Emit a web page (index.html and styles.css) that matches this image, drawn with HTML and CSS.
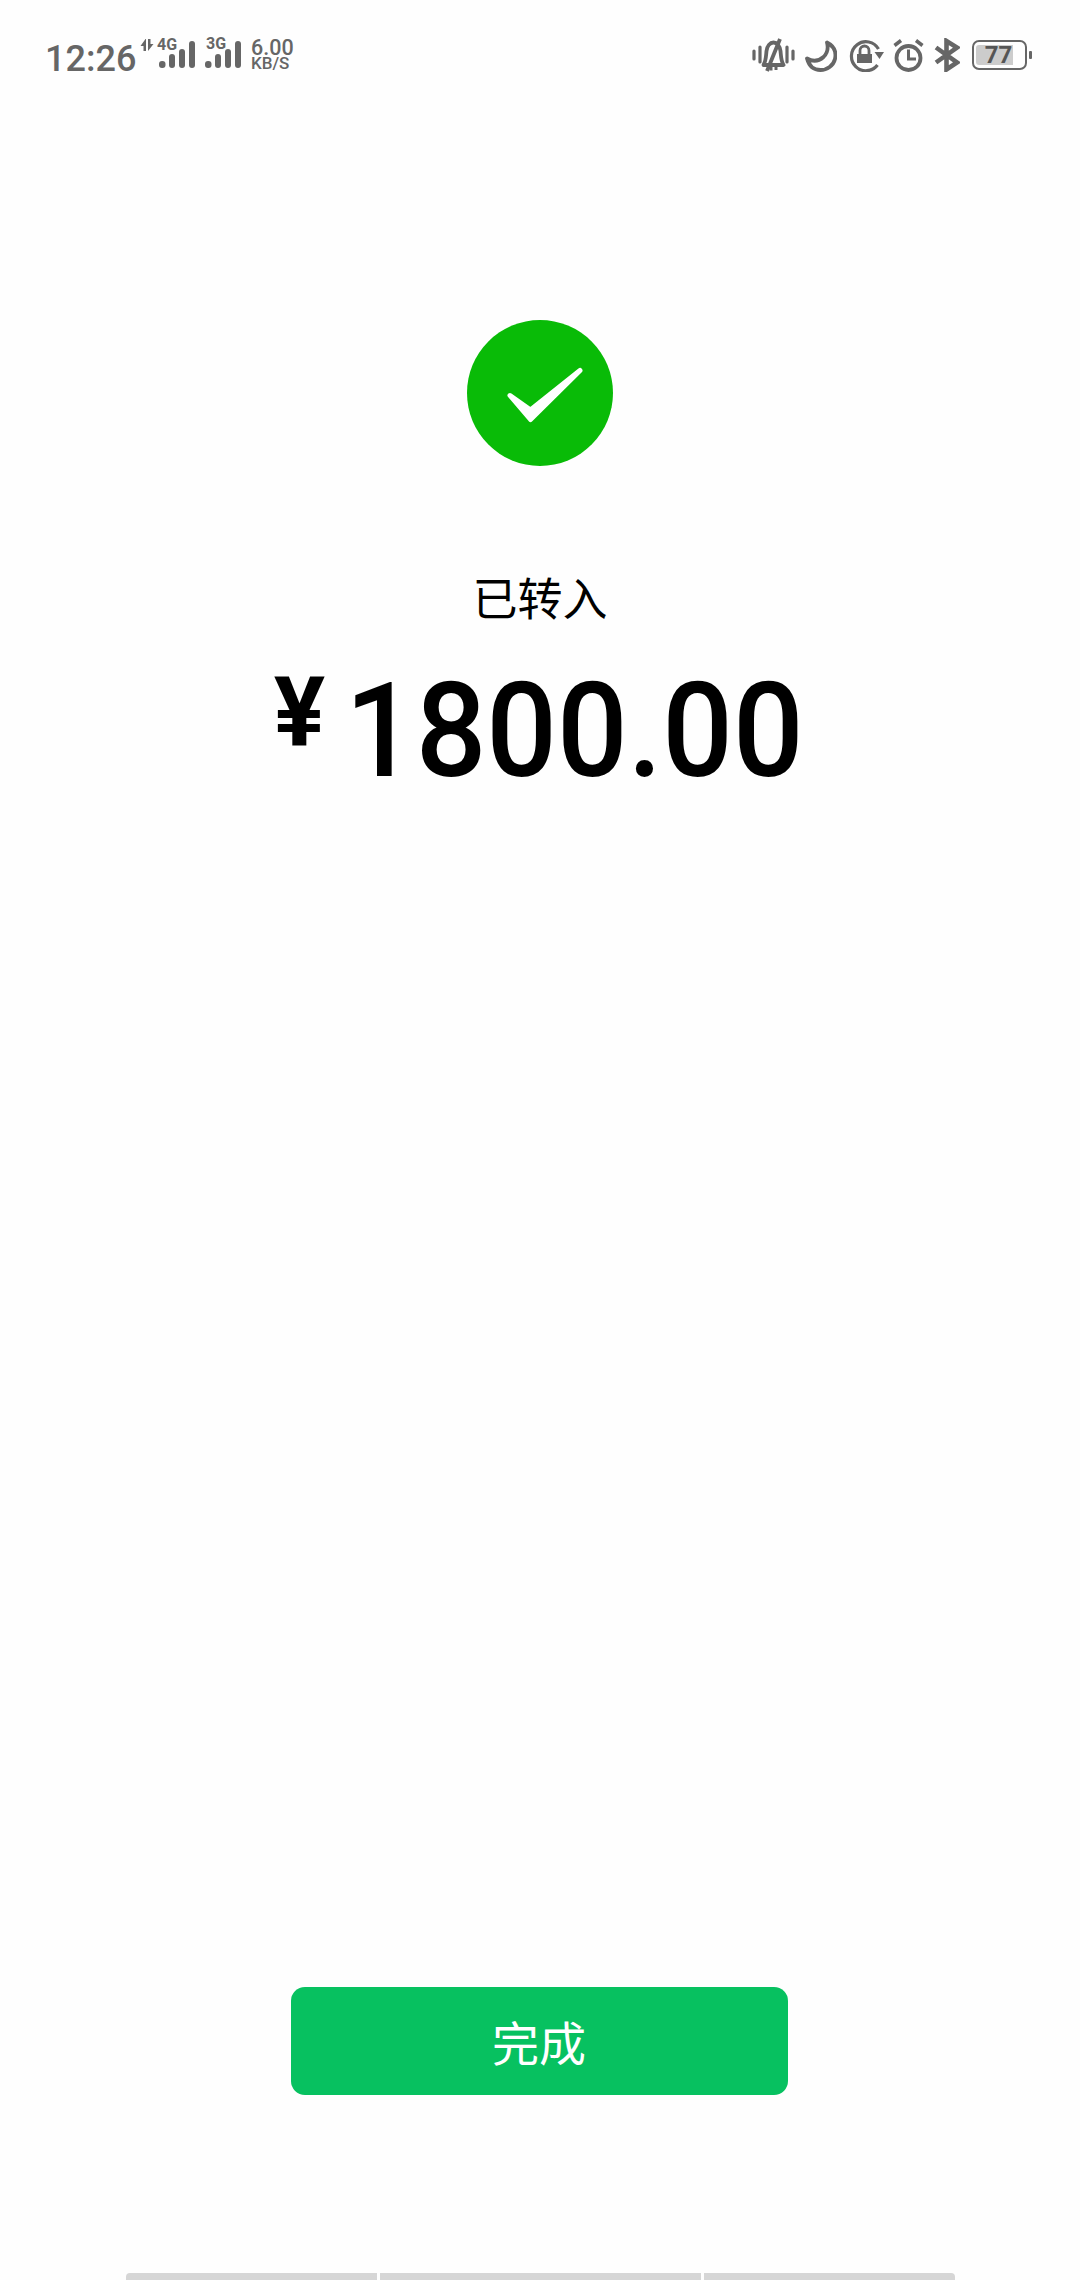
FILE: index.html
```html
<!DOCTYPE html>
<html lang="zh">
<head>
<meta charset="utf-8">
<title>已转入</title>
<link rel="stylesheet" href="styles.css">
</head>
<body>
<div class="page">
  <header class="status">
    <div class="status-left">
      <span class="time">12:26</span>
      <svg class="updown" viewBox="0 0 14 12"><path d="M5.500 0L0.500 7H3.500V12H6V0ZM8 0V12L13.500 5H10.500V0Z" fill="#666"/></svg>
      <div class="signal sig-first">
        <span class="net">4G</span>
        <svg class="bars" viewBox="0 0 36 27"><g fill="#666"><rect x="0" y="20" width="6.500" height="7" rx="3"/><rect x="10" y="13" width="6" height="14" rx="3"/><rect x="20" y="8" width="6" height="19" rx="3"/><rect x="30" y="0" width="6" height="27" rx="3"/></g></svg>
      </div>
      <div class="signal sig-second">
        <span class="net">3G</span>
        <svg class="bars" viewBox="0 0 36 27"><g fill="#666"><rect x="0" y="20" width="6.500" height="7" rx="3"/><rect x="10" y="13" width="6" height="14" rx="3"/><rect x="20" y="8" width="6" height="19" rx="3"/><rect x="30" y="0" width="6" height="27" rx="3"/></g></svg>
      </div>
      <div class="speed"><span class="speed-num">6.00</span><span class="speed-unit">KB/S</span></div>
    </div>
    <div class="status-right">
      <svg class="ico-bell" width="43" height="34" viewBox="0 0 43 34"><g fill="none" stroke="#666" stroke-width="3.800"><path d="M11.500 27C14 23 14 18 14.500 13C15 8 18 4.500 21.500 4.500C25 4.500 28 8 28.500 13C29 18 29 23 31.500 27Z" stroke-linejoin="round"/><path d="M28 1L15 33"/><path d="M19 28.500V32.500M24 28.500V32" stroke-width="3"/></g><g stroke="#666" stroke-width="3.200" stroke-linecap="round"><path d="M2 13V21M8 9V24M35 9V24M41 13V21"/></g></svg>
      <svg class="ico-moon" width="32" height="32" viewBox="0 0 32 32"><path d="M22 2.500C29 6 31.500 12 30 19C28.500 25.500 22 30 15.500 30C9 30 4 26 2 18.500C8 22 14 21 18.500 17C22.500 13 23.500 8 22 2.500Z" fill="none" stroke="#666" stroke-width="3.800" stroke-linejoin="round"/></svg>
      <svg class="ico-lock" width="35" height="33" viewBox="0 0 35 33"><path d="M29.500 10A14.500 14.500 0 1 0 28.500 26" fill="none" stroke="#666" stroke-width="3.200"/><path d="M25.500 13H35L30.500 20Z" fill="#666"/><path d="M8 15H23V24H8Z" fill="#666"/><path d="M11 15V11.500A4.500 4.500 0 0 1 20 11.500V15" fill="none" stroke="#666" stroke-width="2.800"/></svg>
      <svg class="ico-alarm" width="31" height="33" viewBox="0 0 31 33"><circle cx="15.500" cy="19" r="12" fill="none" stroke="#666" stroke-width="3.800"/><path d="M15.500 10.500V20H23" fill="none" stroke="#666" stroke-width="3"/><path d="M1.500 6.500L8 1.500M29.500 6.500L23 1.500" stroke="#666" stroke-width="3.500"/></svg>
      <svg class="ico-bt" width="26" height="34" viewBox="0 0 26 34"><path d="M2 9.500L23 24.500L12.500 31.500V3L23 9.500L2 24.500" fill="none" stroke="#666" stroke-width="4.600"/></svg>
      <div class="battery">
        <div class="battery-body"><div class="battery-fill"><span class="battery-num">77</span></div></div>
        <span class="battery-nub"></span>
      </div>
    </div>
  </header>

  <main class="result">
    <svg class="check" width="146" height="146" viewBox="0 0 146 146"><circle cx="73" cy="73" r="73" fill="#09bb07"/><path d="M43 75.500L63.500 90L113 50.500L63.500 99.500Z" fill="#fff" stroke="#fff" stroke-width="5" stroke-linejoin="round"/></svg>
    <p class="label">已转入</p>
    <div class="amount"><span class="currency">¥</span><span class="value">1800.00</span></div>
  </main>

  <div class="action"><button class="done">完成</button></div>

  <div class="navbar">
    <span class="seg seg-a"></span><span class="seg seg-b"></span><span class="seg seg-c"></span>
  </div>
</div>
</body>
</html>
```

FILE: styles.css
```css
html, body { margin: 0; padding: 0; }
body { background: #fefefe; font-family: Roboto, "Noto Sans CJK SC", sans-serif; color: #000; }
.page { width: 1080px; height: 2280px; display: flex; flex-direction: column; overflow: hidden; }

.status { height: 110px; flex: none; display: flex; justify-content: space-between; align-items: flex-start; padding: 38px 48px 0 45px; box-sizing: border-box; color: #666; }
.status-left { display: flex; align-items: flex-start; }
.time { font-size: 36px; font-weight: 500; line-height: 42px; width: 95px; }
.updown { width: 14px; height: 12px; margin-top: 1px; }
.signal { position: relative; width: 36px; height: 30px; margin-top: 3px; }
.sig-first { margin-left: 5px; }
.sig-second { margin-left: 10px; }
.bars { display: block; width: 36px; height: 27px; }
.net { position: absolute; left: -2px; top: -3px; font-size: 16px; line-height: 14px; font-weight: 700; color: #666; }
.sig-second .net { left: 1px; top: -4px; }
.speed { display: flex; flex-direction: column; margin-left: 10px; margin-top: 1px; }
.speed-num { font-size: 21.500px; line-height: 18px; font-weight: 500; }
.speed-unit { font-size: 17px; line-height: 12px; font-weight: 500; }

.status-right { display: flex; align-items: flex-start; }
.ico-bell { margin-right: 10px; }
.ico-moon { margin-top: 2px; margin-right: 12px; }
.ico-lock { margin-top: 1px; margin-right: 9px; }
.ico-alarm { margin-top: 1px; margin-right: 10px; }
.ico-bt { margin-right: 12px; }
.battery { display: flex; align-items: center; margin-top: 2px; }
.battery-body { width: 55px; height: 30px; box-sizing: border-box; border: 2.500px solid #666; border-radius: 7px; padding: 2.500px 2px; }
.battery-fill { width: 37px; height: 20px; background: #ccc; border-radius: 3px 0 0 3px; display: flex; justify-content: center; align-items: center; }
.battery-num { font-size: 24px; line-height: 20px; font-weight: 700; color: #555; margin-left: 8px; }
.battery-nub { width: 3px; height: 8px; margin-left: 2px; background: #666; border-radius: 1px; }

.result { flex: none; display: flex; flex-direction: column; align-items: center; padding-top: 210px; height: 1877px; box-sizing: border-box; }
.check { display: block; }
.label { margin: 102px 0 0; font-size: 45px; line-height: 58px; font-family: "Noto Sans CJK SC", sans-serif; }
.amount { display: flex; align-items: flex-start; margin-top: 40px; padding-right: 2px; }
.currency { font-size: 96px; line-height: 100px; font-weight: 700; margin-right: 20px; margin-top: -4px; }
.value { font-size: 132px; line-height: 130px; font-weight: 500; transform: scaleX(.942); transform-origin: left center; margin-right: -28px; }

.action { flex: none; display: flex; justify-content: center; padding-right: 2px; }
.done { width: 497px; height: 108px; border: 0; padding: 0 0 2px; border-radius: 14px; background: #07c160; color: #fff; font-size: 47px; font-family: "Noto Sans CJK SC", sans-serif; }

.navbar { margin-top: auto; height: 7px; display: flex; justify-content: center; gap: 3px; }
.seg { background: #d6d6d6; height: 7px; }
.seg-a { width: 251px; border-radius: 4px 0 0 0; }
.seg-b { width: 321px; }
.seg-c { width: 251px; border-radius: 0 4px 0 0; }
```
